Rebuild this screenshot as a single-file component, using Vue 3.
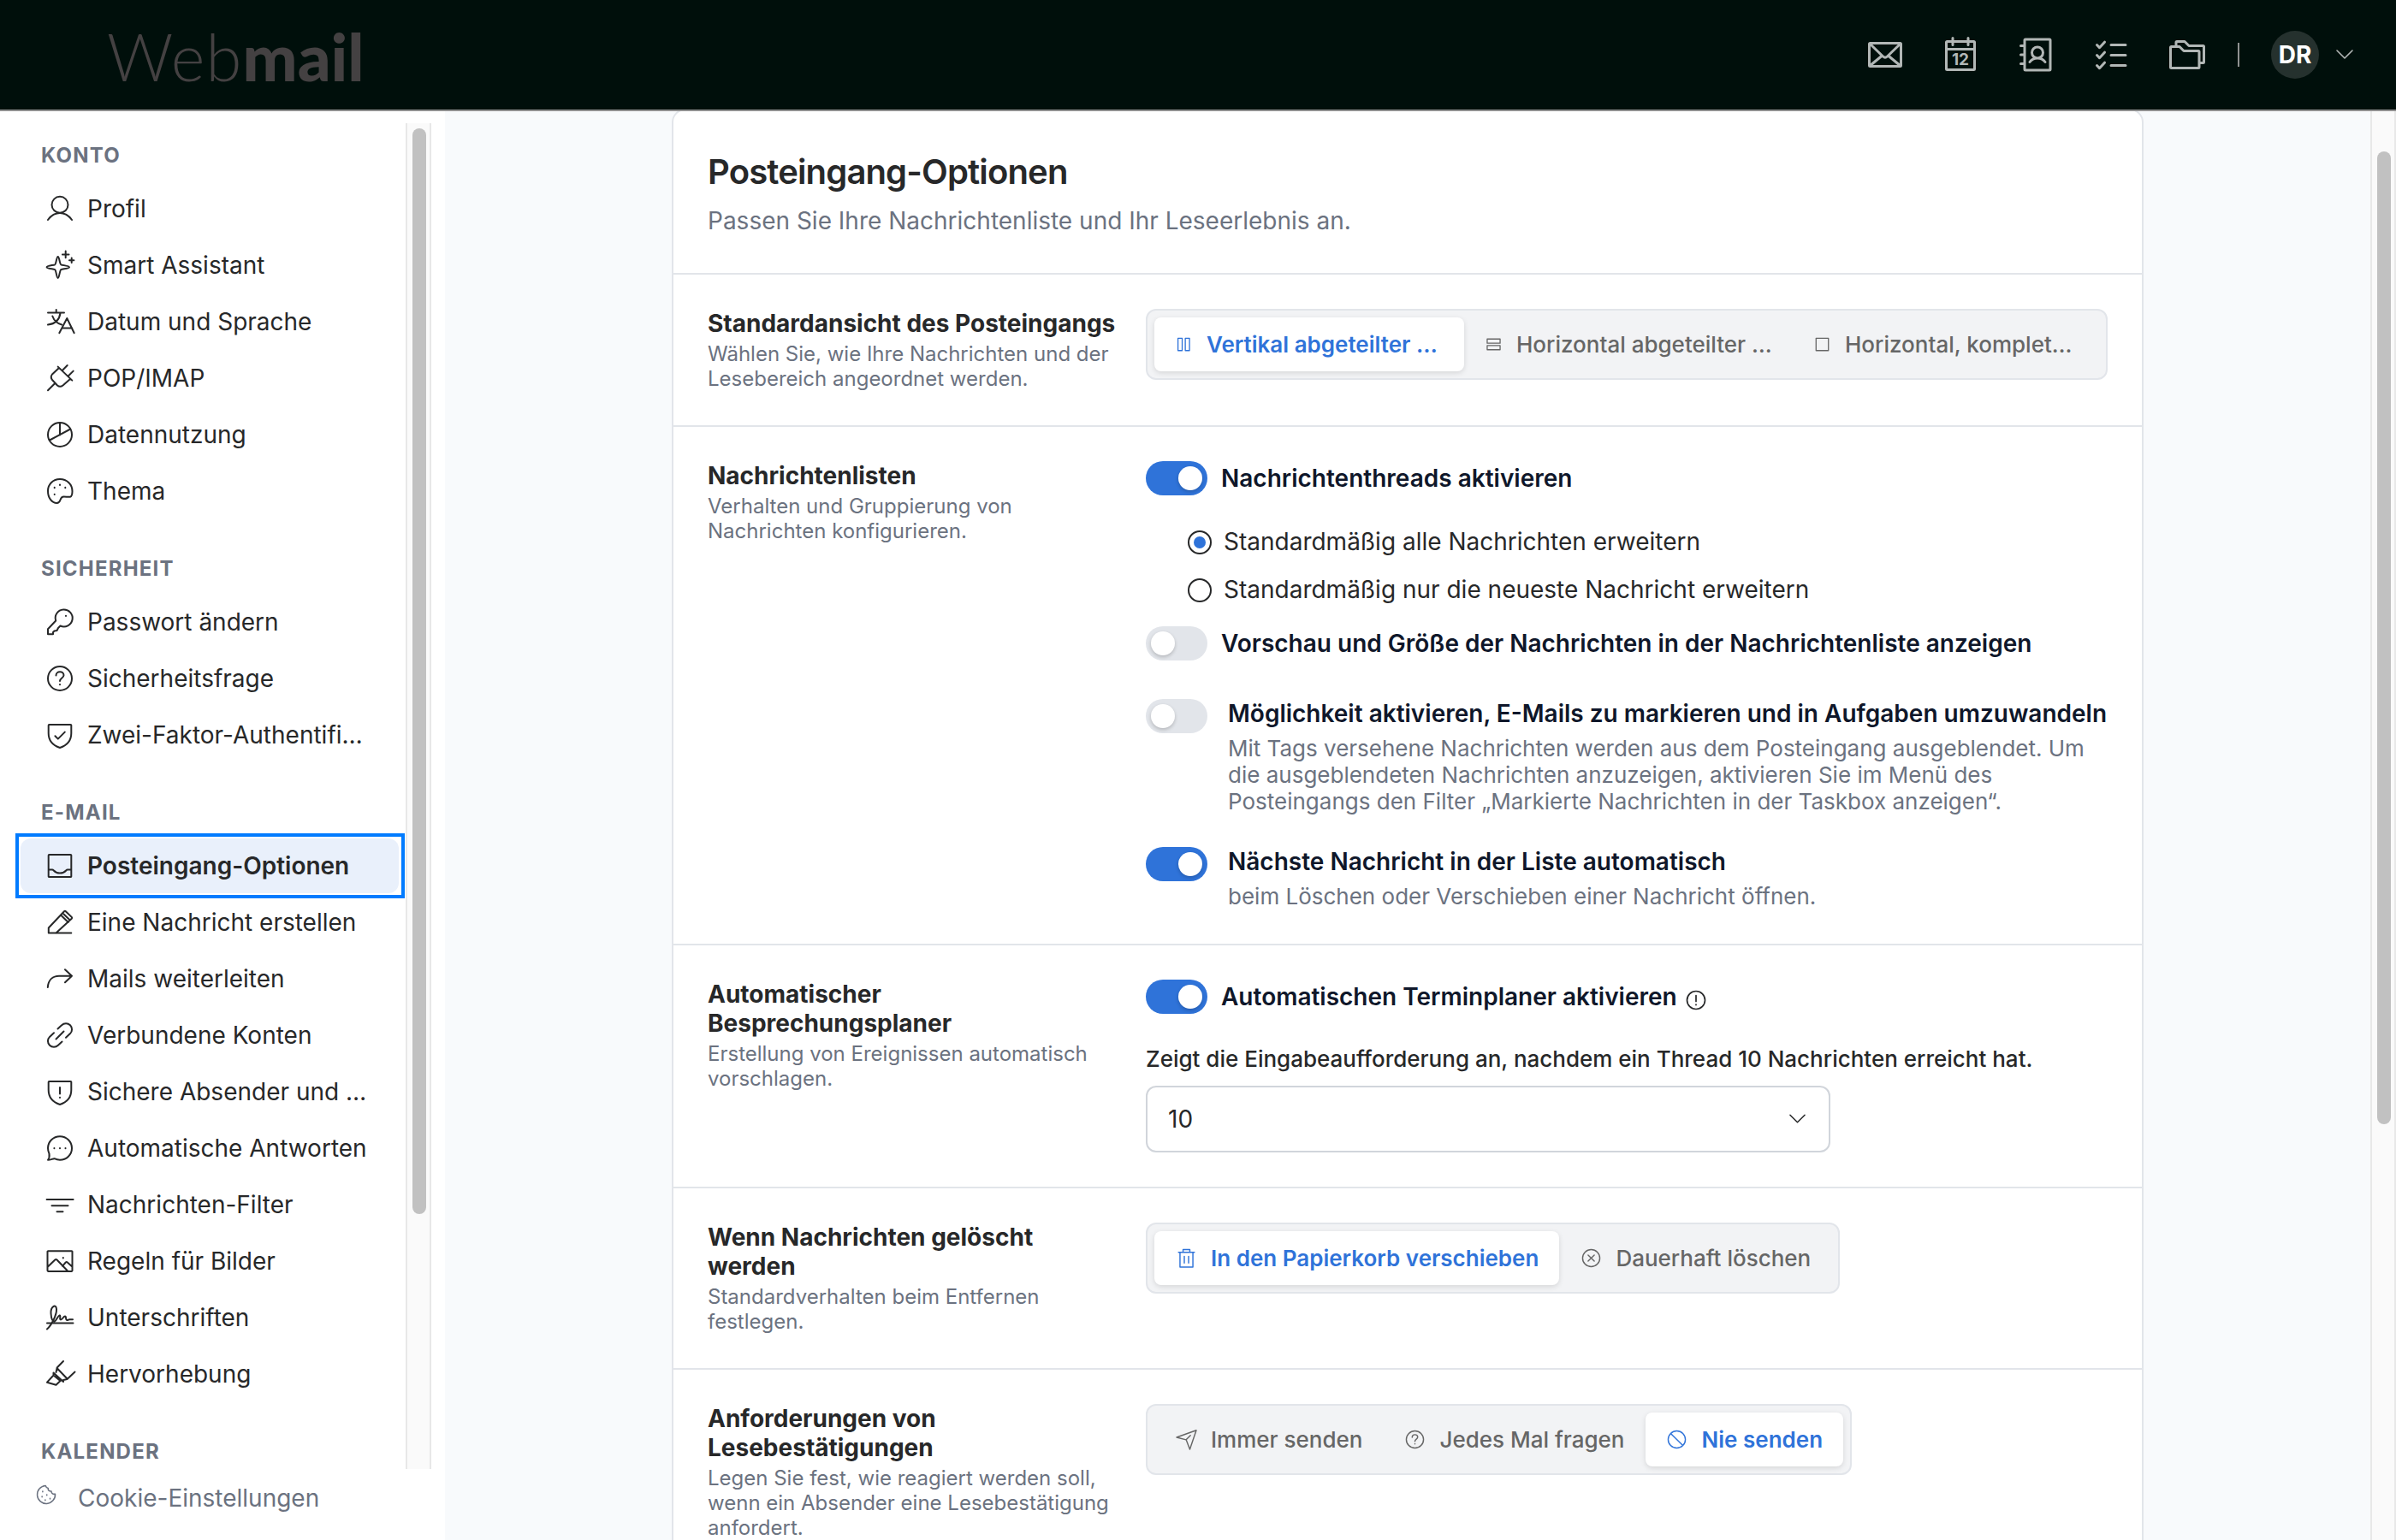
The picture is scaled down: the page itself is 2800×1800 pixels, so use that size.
<script setup>
import { ref } from 'vue';

const circle = 'M2 16a14 14 0 1 0 28 0a14 14 0 1 0-28 0';
const question = 'M11.5 12.5c0-2.600 2-4.300 4.500-4.300s4.500 1.700 4.500 4.100c0 3.200-4.500 3.200-4.500 6.700M16 23v.3';
const shield = 'M3.500 4h25a.8.8 0 0 1 .8.8V14c0 9-5 14.200-13.300 17C7.700 28.200 2.700 23 2.700 14V4.800a.8.8 0 0 1 .8-.8z';

// Icônes dessinées sur une grille de 32
const icons = {
  user: 'M6.500 11.300a9.500 9.500 0 1 0 19 0a9.500 9.500 0 1 0-19 0M2 29c3.500-5 8-8 14-8s10.500 3 14 8',
  sparkle: 'M13.700 6c1.600 0 2 8.500 3.600 9.300 1.700.8 9.700 1.300 9.700 2.900s-8 2.100-9.700 2.900c-1.600.9-2 9.900-3.600 9.900s-2-9-3.600-9.900C8.400 20.300.6 19.800.6 18.200s7.800-2.100 9.500-2.900C11.700 14.500 12.100 6 13.700 6zM22.700-.4v7.600M18.900 3.400h7.600M29.700 7.500v5.400M27 10.200h5.400',
  translate: 'M2 5.500h19M11.700 2v3.500M16.500 6C15.500 13.500 10.500 18.500 2 19.600M7.300 9.500c1.800 5 5.500 8.600 10.800 10M15.300 29.200L24.300 12l8.400 17.200M18.300 23.600h11.900',
  plug: 'M2 30.200l7.500-7.500M13.700 2.600l16.600 16M19.300 6.500l5.400-5.500M26 13.300l5.700-5.700M15 4l-8 7.500q-2.500 3.200 0 6.500l6 6.500q3.200 2.600 6.500 0l8.500-7.500',
  pie: circle + 'M16 2v14.500M4 22.500L28.300 9.500',
  palette: 'M16 2C8 2 2 8 2 15.700 2 24 6.500 30 12.500 30c5.500 0 2.500-7.500 8-7.500 3 0 5 .6 7.500.2 2.600-.6 2.500-4 2.500-6.700C30.500 8 24 2 16 2zM9.700 11.800v.4M16 8.600v.4M22.300 11.800v.4M9.700 19.700v.4',
  key: 'M11.200 14.500A10 10 0 1 1 16.500 20.500L14 23l-1.500 3-3 .5L8 28v2.200H2v-6zM23 8.800v.3',
  question: circle + question,
  shieldCheck: shield + 'M10.400 17.200l3.400 3.400 8-8',
  inbox: 'M3.500 3h25a.8.8 0 0 1 .8.8v24.500a.8.8 0 0 1-.8.8h-25a.8.8 0 0 1-.8-.8V3.800a.8.8 0 0 1 .8-.8zM2.700 20.400h4.500c1.800 0 2 4.200 8.800 4.200s7-4.200 8.800-4.200h4.500',
  pencil: 'M2.800 28.600V22.500L21 3.200q.9-.9 1.800 0l6.900 6.700q.9.900 0 1.800L11.500 28.600M2.800 28.600h26.500M17 7.500l8.700 8.500M20.500 6.500l6.500 6.300',
  forward: 'M1.800 26C2.500 17 8 12.700 15 12.700h15M22 5.200l8 7.500-8 7.500',
  link: 'M13.500 8.500l4.600-4.300a7 7 0 0 1 9.900 9.900l-5 4.600M18.500 23.500l-4.600 4.300a7 7 0 0 1-9.900-9.900l5-4.600M11.500 20.500l9-9',
  shieldAlert: shield + 'M16 11v7.500M16 22.700v.4',
  chat: 'M2 29.800C4 27.500 4 26 3.500 22.500 2.600 20.500 2 18.300 2 16a14 13.800 0 1 1 14 13.800c-3 0-4.500-.6-6.500-1.600C7 28.600 5 29.800 2 29.800zM9.400 16v.3M16 16v.3M22.500 16v.3',
  filter: 'M.6 10h31M6.500 17.200h19M12.500 24.200h7',
  image: 'M2.300 4.300h27.400a.8.8 0 0 1 .8.8v22a.8.800 0 0 1-.8.800H2.300a.8.800 0 0 1-.8-.8v-22a.8.800 0 0 1 .8-.8zM2 22.500l8.300-8q1.100-.9 2.200 0L25 27.500M19 21.800l3.800-4.300q1-.9 2 0l5.500 5M19.800 12v.4',
  signature: 'M1 22.500h30.500M1 29.500C6 25 12.500 13 12 6 11.500-.5 5 3 5.500 11c.3 5 1.500 9.500 4 9.500 2 0 4-6.500 6-7 2-.3-.5 5 1.500 5s3-4 5-4 0 4.500 2.500 4.500c1.500 0 1.500-1 3-.7h3.500',
  highlight: 'M1 25.700l7.500-8.200 8 6.500-5 4.800zM8.500 17.500V14.500L20 25v-1.500h-3.500M11.500 14l1.200-5.500L20 1M20 23l4.500-1 9-8.500M12.500 9l12 12.500',
  cookie: 'M15 2a14 14 0 1 0 15 13c-4 .8-6-1.500-6-4.500-3.500.5-5.500-1.500-5-4.500C16.500 5.500 15.500 4 15 2zM10.500 10.500v1M9.500 18.500v1M17 16v1M22 21.500v1M14.500 24v1',
  columns: 'M5.500 5h7.500v22H5.500zM18.500 5h7.500v22h-7.500z',
  rows: 'M4.500 6.500h23v7.500H4.500zM4.500 18h23v7.500H4.500z',
  square: 'M5 5h22v22H5z',
  trash: 'M3 6.500h26M5.500 6.500v24h21v-24M10.500 6.500V2h11v4.500M12.500 13v11M19.500 13v11',
  circleX: circle + 'M11 11l10 10M21 11l-10 10',
  send: 'M0 12.500L32 1 21.500 32l-6-15.500zM15.500 16.500l7-7',
  ban: circle + 'M6.500 6.500l19 19',
};

const groups = [
  {
    title: 'KONTO',
    items: [
      { icon: 'user', label: 'Profil' },
      { icon: 'sparkle', label: 'Smart Assistant' },
      { icon: 'translate', label: 'Datum und Sprache' },
      { icon: 'plug', label: 'POP/IMAP' },
      { icon: 'pie', label: 'Datennutzung' },
      { icon: 'palette', label: 'Thema' },
    ],
  },
  {
    title: 'SICHERHEIT',
    items: [
      { icon: 'key', label: 'Passwort ändern' },
      { icon: 'question', label: 'Sicherheitsfrage' },
      { icon: 'shieldCheck', label: 'Zwei-Faktor-Authentifi…' },
    ],
  },
  {
    title: 'E-MAIL',
    items: [
      { icon: 'inbox', label: 'Posteingang-Optionen' },
      { icon: 'pencil', label: 'Eine Nachricht erstellen' },
      { icon: 'forward', label: 'Mails weiterleiten' },
      { icon: 'link', label: 'Verbundene Konten' },
      { icon: 'shieldAlert', label: 'Sichere Absender und …' },
      { icon: 'chat', label: 'Automatische Antworten' },
      { icon: 'filter', label: 'Nachrichten-Filter' },
      { icon: 'image', label: 'Regeln für Bilder' },
      { icon: 'signature', label: 'Unterschriften' },
      { icon: 'highlight', label: 'Hervorhebung' },
    ],
  },
  { title: 'KALENDER', items: [] },
];

const apps = [
  // mail, calendrier, contacts, tâches, fichiers
  { name: 'mail', d: 'M6.500 10.500h35a1 1 0 0 1 1 1v25a1 1 0 0 1-1 1h-35a1 1 0 0 1-1-1v-25a1 1 0 0 1 1-1zM6 11l15.500 15q2.500 2.400 5 0L42 11M6 37l14.500-12M42 37L27.500 25' },
  { name: 'calendar', d: 'M8.500 8.500h31a1 1 0 0 1 1 1v31a1 1 0 0 1-1 1h-31a1 1 0 0 1-1-1v-31a1 1 0 0 1 1-1zM7.500 17.500h33M15 4.500v8M33 4.500v8', text: '12' },
  { name: 'contacts', d: 'M12 6h28a1 1 0 0 1 1 1v34a1 1 0 0 1-1 1H12a1 1 0 0 1-1-1V7a1 1 0 0 1 1-1zM6.500 13.500h4M6.500 24h4M6.500 34.500h4M19.500 21.500a6.500 6.500 0 1 0 13 0a6.500 6.500 0 1 0-13 0M17 32.500c2-3 5-4.500 9-4.500s7 1.500 9 4.500' },
  { name: 'tasks', d: 'M7.500 12.500l3 3.200 6-6.500M7.500 24.500l3 3.200 6-6.500M7.500 36.500l3 3.200 6-6.500M24 12.500h17M24 24.500h17M24 36.500h17' },
  { name: 'files', d: 'M6.500 14.500h9.500l5 5H38a1 1 0 0 1 1 1V38.500a1 1 0 0 1-1 1H6.500a1 1 0 0 1-1-1V15.500a1 1 0 0 1 1-1zM12 14V9.500a1 1 0 0 1 1-1h9l5 5h16.500a1 1 0 0 1 1 1V32.500a1 1 0 0 1-1 1H39.500' },
];

const layouts = [
  { icon: 'columns', label: 'Vertikal abgeteilter …', width: 362 },
  { icon: 'rows', label: 'Horizontal abgeteilter …', width: 384 },
  { icon: 'square', label: 'Horizontal, komplet…', width: 358 },
];
const deleteModes = [
  { icon: 'trash', label: 'In den Papierkorb verschieben' },
  { icon: 'circleX', label: 'Dauerhaft löschen' },
];
const receiptModes = [
  { icon: 'send', label: 'Immer senden' },
  { icon: 'question', label: 'Jedes Mal fragen' },
  { icon: 'ban', label: 'Nie senden' },
];

const activeItem = ref('Posteingang-Optionen');
const layout = ref(0);
const threads = ref(true);
const expand = ref('all');
const preview = ref(false);
const taskbox = ref(false);
const nextMessage = ref(true);
const scheduler = ref(true);
const deleteMode = ref(0);
const receiptMode = ref(2);
</script>

<template>
  <div class="app">
    <header class="topbar">
      <div class="logo"><span>Web</span><b>mail</b></div>
      <nav class="apps">
        <svg v-for="app in apps" :key="app.name" class="app-icon" viewBox="0 0 48 48">
          <path :d="app.d" />
          <text v-if="app.text" x="24" y="36" text-anchor="middle">{{ app.text }}</text>
        </svg>
      </nav>
      <span class="separator"></span>
      <span class="avatar">DR</span>
      <svg class="user-chevron" viewBox="0 0 20 12"><path d="M1 1l9 9 9-9" /></svg>
    </header>

    <div class="body">
      <aside class="sidebar">
        <div class="sidebar-scroll">
          <div class="menu">
            <section v-for="group in groups" :key="group.title" class="group">
              <h2>{{ group.title }}</h2>
              <a
                v-for="item in group.items"
                :key="item.label"
                class="item"
                :class="{ active: item.label === activeItem }"
                @click="activeItem = item.label"
              >
                <span class="item-inner">
                  <svg class="icon" viewBox="0 0 32 32"><path :d="icons[item.icon]" /></svg>
                  <span>{{ item.label }}</span>
                </span>
              </a>
            </section>
          </div>
          <div class="track"><div class="thumb"></div></div>
        </div>
        <div class="cookies">
          <svg class="icon" viewBox="0 0 32 32"><path :d="icons.cookie" /></svg>
          <span>Cookie-Einstellungen</span>
        </div>
      </aside>

      <main class="content">
        <div class="card">
          <div class="card-head">
            <h1>Posteingang-Optionen</h1>
            <p>Passen Sie Ihre Nachrichtenliste und Ihr Leseerlebnis an.</p>
          </div>

          <div class="row">
            <div class="info">
              <h3>Standardansicht des Posteingangs</h3>
              <p>Wählen Sie, wie Ihre Nachrichten und der Lesebereich angeordnet werden.</p>
            </div>
            <div class="segmented compact">
              <button
                v-for="(option, i) in layouts"
                :key="option.icon"
                :class="{ selected: layout === i }"
                :style="{ width: option.width + 'px' }"
                @click="layout = i"
              >
                <svg class="icon" viewBox="0 0 32 32"><path :d="icons[option.icon]" /></svg>
                <span>{{ option.label }}</span>
              </button>
            </div>
          </div>

          <div class="row">
            <div class="info">
              <h3>Nachrichtenlisten</h3>
              <p>Verhalten und Gruppierung von Nachrichten konfigurieren.</p>
            </div>
            <div class="controls">
              <div class="toggle-row">
                <span class="toggle" :class="{ on: threads }" @click="threads = !threads"></span>
                <span class="label">Nachrichtenthreads aktivieren</span>
              </div>
              <div class="radios">
                <label @click="expand = 'all'">
                  <span class="radio" :class="{ checked: expand === 'all' }"></span>
                  Standardmäßig alle Nachrichten erweitern
                </label>
                <label @click="expand = 'latest'">
                  <span class="radio" :class="{ checked: expand === 'latest' }"></span>
                  Standardmäßig nur die neueste Nachricht erweitern
                </label>
              </div>
              <div class="toggle-row preview">
                <span class="toggle" :class="{ on: preview }" @click="preview = !preview"></span>
                <span class="label">Vorschau und Größe der Nachrichten in der Nachrichtenliste anzeigen</span>
              </div>
              <div class="toggle-block">
                <span class="toggle" :class="{ on: taskbox }" @click="taskbox = !taskbox"></span>
                <div>
                  <span class="label">Möglichkeit aktivieren, E-Mails zu markieren und in Aufgaben umzuwandeln</span>
                  <p>
                    Mit Tags versehene Nachrichten werden aus dem Posteingang ausgeblendet. Um<br />
                    die ausgeblendeten Nachrichten anzuzeigen, aktivieren Sie im Menü des<br />
                    Posteingangs den Filter „Markierte Nachrichten in der Taskbox anzeigen“.
                  </p>
                </div>
              </div>
              <div class="toggle-block">
                <span class="toggle" :class="{ on: nextMessage }" @click="nextMessage = !nextMessage"></span>
                <div>
                  <span class="label">Nächste Nachricht in der Liste automatisch</span>
                  <p>beim Löschen oder Verschieben einer Nachricht öffnen.</p>
                </div>
              </div>
            </div>
          </div>

          <div class="row">
            <div class="info">
              <h3>Automatischer Besprechungsplaner</h3>
              <p>Erstellung von Ereignissen automatisch vorschlagen.</p>
            </div>
            <div class="controls">
              <div class="toggle-row">
                <span class="toggle" :class="{ on: scheduler }" @click="scheduler = !scheduler"></span>
                <span class="label">Automatischen Terminplaner aktivieren</span>
                <svg class="hint" viewBox="0 0 24 24">
                  <circle cx="12" cy="12" r="10.500" />
                  <path d="M12 6.500v7M12 17v.6" />
                </svg>
              </div>
              <p class="threshold">Zeigt die Eingabeaufforderung an, nachdem ein Thread 10 Nachrichten erreicht hat.</p>
              <div class="select">
                <span>10</span>
                <svg viewBox="0 0 20 12"><path d="M1 1l9 9 9-9" /></svg>
              </div>
            </div>
          </div>

          <div class="row">
            <div class="info">
              <h3>Wenn Nachrichten gelöscht werden</h3>
              <p>Standardverhalten beim Entfernen festlegen.</p>
            </div>
            <div class="segmented">
              <button
                v-for="(option, i) in deleteModes"
                :key="option.icon"
                :class="{ selected: deleteMode === i }"
                @click="deleteMode = i"
              >
                <svg class="icon" viewBox="0 0 32 32"><path :d="icons[option.icon]" /></svg>
                <span>{{ option.label }}</span>
              </button>
            </div>
          </div>

          <div class="row">
            <div class="info">
              <h3>Anforderungen von Lesebestätigungen</h3>
              <p>Legen Sie fest, wie reagiert werden soll, wenn ein Absender eine Lesebestätigung anfordert.</p>
            </div>
            <div class="segmented">
              <button
                v-for="(option, i) in receiptModes"
                :key="option.icon"
                :class="{ selected: receiptMode === i }"
                @click="receiptMode = i"
              >
                <svg class="icon" viewBox="0 0 32 32"><path :d="icons[option.icon]" /></svg>
                <span>{{ option.label }}</span>
              </button>
            </div>
          </div>
        </div>
      </main>
      <div class="track page-track"><div class="thumb"></div></div>
    </div>
  </div>
</template>

<style>
body {
  margin: 0;
  overflow: hidden;
}
</style>

<style scoped>
.app {
  display: flex;
  flex-direction: column;
  width: 2800px;
  height: 1800px;
  overflow: hidden;
  background: #fff;
  color: #272829;
  font-family: Inter, "Liberation Sans", sans-serif;
  font-size: 28px;
  line-height: 34px;
}

h1, h2, h3, p {
  margin: 0;
}

svg {
  flex: none;
  overflow: visible;
  fill: none;
  stroke: currentColor;
  stroke-width: 2;
  stroke-linecap: round;
  stroke-linejoin: round;
}

/* Barre du haut */
.topbar {
  display: flex;
  flex: none;
  align-items: center;
  box-sizing: border-box;
  height: 130px;
  padding: 0 50px 0 125px;
  border-bottom: 2px solid #8f8f8f;
  background: #000f0b;
}

.logo {
  margin-right: auto;
  padding-top: 3px;
  color: #444142;
  font-family: Lato, sans-serif;
  font-size: 76px;
  font-weight: 300;
  line-height: 90px;
}

.logo span {
  letter-spacing: 1.2px;
}

.logo b {
  font-weight: 900;
}

.apps {
  display: flex;
  gap: 40px;
  color: #b2b7b6;
}

.app-icon {
  width: 48px;
  height: 48px;
  stroke-width: 3;
}

.app-icon text {
  fill: currentColor;
  stroke: none;
  font-size: 19px;
  font-weight: 700;
}

.separator {
  width: 2px;
  height: 28px;
  margin: 0 37px 0 36px;
  background: #8f9291;
}

.avatar {
  width: 56px;
  height: 56px;
  margin-right: 20px;
  border-radius: 50%;
  background: #25312e;
  color: #fff;
  font-weight: 700;
  line-height: 56px;
  text-align: center;
}

.user-chevron {
  width: 20px;
  height: 12px;
  color: #b2b7b6;
  stroke-width: 1.6;
}

/* Menu latéral */
.body {
  display: flex;
  flex: 1;
  min-height: 0;
}

.sidebar {
  display: flex;
  flex: none;
  flex-direction: column;
  box-sizing: border-box;
  width: 520px;
  padding: 14px 16px 0 24px;
}

.sidebar-scroll {
  display: flex;
  height: 1573px;
  gap: 7px;
}

.menu {
  display: flex;
  flex: none;
  flex-direction: column;
  gap: 40px;
  width: 443px;
  padding-top: 19px;
}

.group {
  display: flex;
  flex-direction: column;
  gap: 2px;
}

.group h2 {
  margin-bottom: 10px;
  padding-left: 24px;
  color: #6b7280;
  font-size: 24px;
  font-weight: 700;
  letter-spacing: 1.2px;
  line-height: 37px;
}

.item {
  padding-right: 1px;
  cursor: pointer;
}

.item-inner {
  display: flex;
  align-items: center;
  gap: 16px;
  height: 64px;
  padding-left: 30px;
  border-radius: 12px;
  white-space: nowrap;
}

.item.active {
  outline: 4px solid #007bff;
  outline-offset: 2px;
  font-weight: 600;
}

.item.active .item-inner {
  background: #e9f0fb;
}

.icon {
  width: 32px;
  height: 32px;
}

.track {
  flex: none;
  box-sizing: border-box;
  width: 30px;
  padding: 6px;
  border: solid #e8e8e8;
  border-width: 0 2px;
  background: #fafafa;
}

.thumb {
  width: 16px;
  height: 1269px;
  margin: 0 auto;
  border-radius: 8px;
  background: #c1c1c1;
}

.page-track {
  padding-top: 47px;
}

.page-track .thumb {
  height: 1137px;
}

.cookies {
  display: flex;
  align-items: center;
  gap: 25px;
  padding: 17px 0 0 18px;
  color: #6b7280;
}

.cookies .icon {
  width: 24px;
  height: 24px;
  margin-top: -8px;
}

/* Carte des réglages */
.content {
  flex: 1;
  overflow: hidden;
  background: #f8fafc;
}

.card {
  box-sizing: border-box;
  width: 1720px;
  height: 1900px;
  margin: -3px auto 0;
  border: 2px solid #e2e5ea;
  border-radius: 16px;
  background: #fff;
}

.card-head {
  padding: 40px;
}

.card-head h1 {
  padding-top: 2px;
  margin-bottom: 6px;
  font-size: 40px;
  font-weight: 600;
  letter-spacing: -0.85px;
  line-height: 60px;
}

.card-head p {
  color: #6b7280;
  line-height: 42px;
}

.row {
  display: flex;
  align-items: flex-start;
  gap: 32px;
  padding: 40px;
  border-top: 2px solid #e2e5ea;
}

.info {
  flex: none;
  width: 480px;
}

.info h3 {
  margin-bottom: 4px;
  font-size: 28px;
  font-weight: 700;
  line-height: 34px;
}

.info p {
  color: #6b7280;
  font-size: 24px;
  line-height: 29px;
}

.segmented {
  display: flex;
  box-sizing: border-box;
  height: 83px;
  padding: 8px;
  border: 2px solid #e2e5ea;
  border-radius: 12px;
  background: #f2f3f5;
}

.segmented button {
  display: flex;
  align-items: center;
  gap: 16px;
  box-sizing: border-box;
  padding: 0 24px;
  border: 0;
  border-radius: 8px;
  background: none;
  color: #666;
  font: 500 26px/31px Inter, sans-serif;
  white-space: nowrap;
}

.segmented button.selected {
  background: #fff;
  box-shadow: 0 2px 6px rgba(0, 0, 0, 0.12);
  color: #2f73d9;
  font-weight: 600;
}

.segmented .icon {
  width: 23px;
  height: 23px;
  margin: 0 1.5px;
}

.segmented.compact .icon {
  width: 21px;
  height: 21px;
  margin: 0;
}

.label {
  color: #0f172a;
  font-weight: 600;
  white-space: nowrap;
}

.toggle-row {
  display: flex;
  align-items: center;
  gap: 16px;
}

.toggle {
  display: flex;
  flex: none;
  box-sizing: border-box;
  width: 72px;
  height: 40px;
  padding: 6px;
  border-radius: 20px;
  background: #e2e5ea;
}

.toggle::before {
  width: 28px;
  height: 28px;
  border-radius: 50%;
  background: #fff;
  box-shadow: 0 2px 4px rgba(0, 0, 0, 0.2);
  content: "";
}

.toggle.on {
  justify-content: flex-end;
  background: #2f73d9;
}

.radios {
  display: flex;
  flex-direction: column;
  gap: 22px;
  margin: 37px 0 26px 49px;
}

.radios label {
  display: flex;
  align-items: center;
  gap: 14px;
}

.radio {
  display: grid;
  place-items: center;
  box-sizing: border-box;
  width: 28px;
  height: 28px;
  margin-top: 2px;
  border: 2px solid #272829;
  border-radius: 50%;
}

.radio.checked::before {
  width: 14px;
  height: 14px;
  border-radius: 50%;
  background: #2f73d9;
  content: "";
}

.preview {
  margin-bottom: 45px;
}

.toggle-block {
  display: flex;
  align-items: flex-start;
  gap: 24px;
}

.toggle-block + .toggle-block {
  margin-top: 38px;
}

.toggle-block p {
  margin-top: 8px;
  color: #6b7280;
  font-size: 26px;
  line-height: 31px;
  white-space: nowrap;
}

.hint {
  width: 24px;
  height: 24px;
  margin: 8px 0 0 -6px;
  stroke-width: 1.7;
}

.threshold {
  margin: 37px 0 16px;
  font-size: 26px;
  font-weight: 500;
  line-height: 31px;
}

.select {
  display: flex;
  align-items: center;
  justify-content: space-between;
  box-sizing: border-box;
  width: 800px;
  height: 78px;
  padding: 0 27px 0 24px;
  border: 2px solid #d1d5db;
  border-radius: 12px;
}

.select svg {
  width: 19px;
  height: 12px;
  stroke-width: 1.6;
}
</style>
